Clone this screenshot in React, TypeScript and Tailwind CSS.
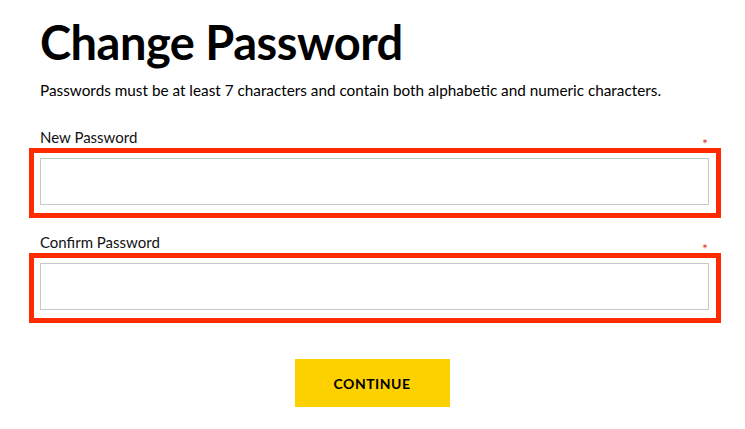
import React from "react";

function Field({ label }: { label: string }) {
  return (
    <div>
      <div className="flex items-end justify-between pl-[11px] pr-[13px]">
        <span className="text-[15px] leading-[20px] text-[#111]">{label}</span>
        <span className="text-[14px] leading-[14px] text-[#e0302a] relative top-[4px]">*</span>
      </div>
      <div className="mt-[1px] border-[5px] border-[#ff2a00] pl-[6px] pr-[7px] pt-[5px] pb-[8px]">
        <input type="password" className="block w-full h-[47px] border border-[#c8c8c8] bg-white outline-none" />
      </div>
    </div>
  );
}

export default function App() {
  return (
    <div className="w-[745px] h-[429px] bg-white text-black" style={{ fontFamily: "Lato, 'Open Sans', sans-serif" }}>
      <div className="pl-[29px] pr-[24px] pt-[14px]">
        <h1 className="pl-[11px] text-[47px] leading-[56px] font-bold tracking-[-0.5px]">Change Password</h1>
        <p className="pl-[11px] mt-[10px] text-[15.3px] leading-[20px]">
          Passwords must be at least 7 characters and contain both alphabetic and numeric characters.
        </p>
        <div className="mt-[27px] flex flex-col gap-[14px]">
          <Field label="New Password" />
          <Field label="Confirm Password" />
        </div>
        <div className="mt-[36px] flex justify-center pr-[6px]">
          <button className="w-[155px] h-[48px] bg-[#fdd000] text-[14px] font-bold tracking-[0.5px]">CONTINUE</button>
        </div>
      </div>
    </div>
  );
}
